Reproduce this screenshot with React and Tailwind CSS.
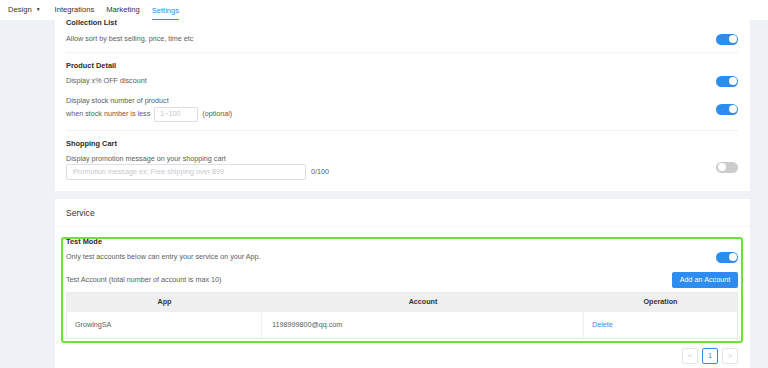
import React from "react";

function Toggle({ on = true }) {
  return (
    <div
      className={`relative w-[22px] h-[11px] rounded-full shrink-0 ${on ? "bg-[#2d8cf0]" : "bg-[#cccccc]"}`}
    >
      <div
        className={`absolute top-[1.5px] w-[8px] h-[8px] rounded-full bg-white ${on ? "right-[1.5px]" : "left-[1.5px]"}`}
      />
    </div>
  );
}

export default function App() {
  return (
    <div className="w-[768px] h-[368px] overflow-hidden bg-[#eef1f6] font-['Liberation_Sans',Arial,sans-serif] text-[7.2px] text-[#5c5c5c]">
      {/* Nav */}
      <div className="h-[20px] bg-white flex items-stretch pl-[8px] text-[7.6px] text-[#333]">
        <div className="flex items-center gap-[4px] mr-[14px]">
          <span>Design</span>
          <span className="text-[5px]">▼</span>
        </div>
        <div className="flex items-center mr-[12px]">Integrations</div>
        <div className="flex items-center mr-[12px]">Marketing</div>
        <div className="flex items-center text-[#2d8cf0] border-b-[1.5px] border-[#2d8cf0] pt-[1.5px]">Settings</div>
      </div>

      <div className="pl-[55px] pr-[18px] flex flex-col gap-[8px]">
        {/* Card 1 */}
        <div className="bg-white pl-[11px] pr-[12px] pb-[11px]">
          <div className="-mt-[2px] h-[10px] leading-[10px] text-[7.4px] font-bold text-[#2b2b2b]">Collection List</div>
          <div className="mt-[5px] h-[12px] flex items-center justify-between">
            <span>Allow sort by best selling, price, time etc</span>
            <Toggle />
          </div>
          <div className="mt-[7px] border-t border-[#f0f1f3]" />

          <div className="mt-[8px] h-[10px] leading-[10px] text-[7.4px] font-bold text-[#2b2b2b]">Product Detail</div>
          <div className="mt-[4px] h-[12px] flex items-center justify-between">
            <span>Display x% OFF discount</span>
            <Toggle />
          </div>
          <div className="mt-[9px] flex items-center justify-between">
            <div className="flex flex-col">
              <div className="h-[10px] leading-[10px]">Display stock number of product</div>
              <div className="mt-[1px] flex items-center h-[15px]">
                <span>when stock number is less</span>
                <div className="ml-[4px] w-[44px] h-[15px] border border-[#dcdee2] rounded-[2px] flex items-center pl-[5px] text-[#c5c8ce]">1~100</div>
                <span className="ml-[4px]">(optional)</span>
              </div>
            </div>
            <Toggle />
          </div>
          <div className="mt-[8px] border-t border-[#f0f1f3]" />

          <div className="mt-[8px] h-[10px] leading-[10px] text-[7.4px] font-bold text-[#2b2b2b]">Shopping Cart</div>
          <div className="mt-[5px] flex items-center justify-between">
            <div className="flex flex-col">
              <div className="h-[10px] leading-[10px]">Display promotion message on your shopping cart</div>
              <div className="flex items-center">
                <div className="w-[240px] h-[16px] border border-[#dcdee2] rounded-[2px] flex items-center pl-[6px] text-[#c5c8ce]">
                  Promotion message ex: Free shipping over $99
                </div>
                <span className="ml-[5px]">0/100</span>
              </div>
            </div>
            <Toggle on={false} />
          </div>
        </div>

        {/* Card 2 */}
        <div className="bg-white h-[200px]">
          <div className="h-[28px] flex items-center pl-[11px] pt-[1px] border-b border-[#f5f6f8] text-[8.6px] text-[#333]">Service</div>
          <div className="pl-[6px] pr-[7px] pt-[10px]">
            <div className="border-2 border-[#6ee03a] rounded-[3px] px-[3px] pb-[2px]">
              <div className="-mt-[2px] h-[10px] leading-[10px] text-[7.4px] font-bold text-[#2b2b2b]">Test Mode</div>
              <div className="mt-[4px] h-[12px] flex items-center justify-between">
                <span>Only test accounts below can entry your service on your App.</span>
                <Toggle />
              </div>
              <div className="mt-[9px] h-[16px] flex items-center justify-between">
                <span>Test Account (total number of account is max 10)</span>
                <div className="w-[66px] h-[16px] bg-[#2d8cf0] rounded-[2px] text-white flex items-center justify-center">Add an Account</div>
              </div>
              <div className="mt-[4px] border border-[#e8eaec]">
                <div className="grid grid-cols-[195px_322px_1fr] h-[19px] bg-[#efefef] text-[#333] font-bold">
                  <div className="flex items-center justify-center">App</div>
                  <div className="flex items-center justify-center">Account</div>
                  <div className="flex items-center justify-center">Operation</div>
                </div>
                <div className="grid grid-cols-[195px_322px_1fr] h-[26px]">
                  <div className="flex items-center pl-[8px] border-r border-[#eeeff1]">GrowingSA</div>
                  <div className="flex items-center pl-[10px] border-r border-[#eeeff1]">1198999800@qq.com</div>
                  <div className="flex items-center pl-[8px] text-[#2d8cf0]">Delete</div>
                </div>
              </div>
            </div>
            <div className="mt-[5px] flex justify-end gap-[4px] pr-[5px]">
              <div className="w-[16px] h-[16px] border border-[#e3e5e8] rounded-[2px] flex items-center justify-center text-[#c5c8ce] text-[7px]">&lt;</div>
              <div className="w-[16px] h-[16px] border border-[#2d8cf0] rounded-[2px] flex items-center justify-center text-[#2d8cf0] text-[7px]">1</div>
              <div className="w-[16px] h-[16px] border border-[#e3e5e8] rounded-[2px] flex items-center justify-center text-[#c5c8ce] text-[7px]">&gt;</div>
            </div>
          </div>
        </div>
      </div>
    </div>
  );
}
